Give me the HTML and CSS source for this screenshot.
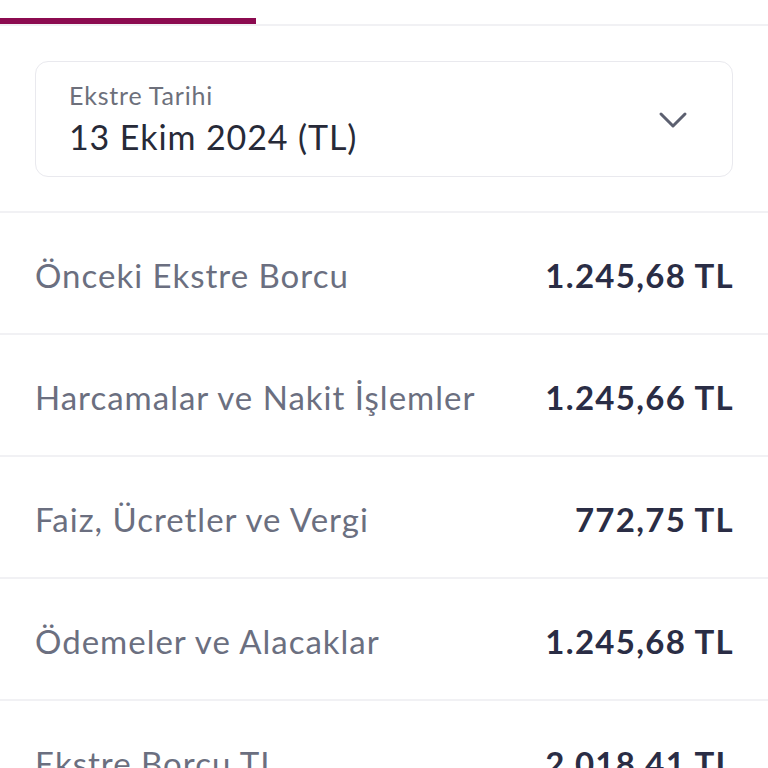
FILE: index.html
```html
<!DOCTYPE html>
<html lang="tr">
<head>
<meta charset="utf-8">
<link rel="stylesheet" href="styles.css">
</head>
<body>
<div class="tabs">
  <div class="tab active"></div>
  <div class="tab"></div>
  <div class="tab"></div>
</div>
<div class="select-wrap">
  <div class="select">
    <div class="select-text">
      <div class="select-label">Ekstre Tarihi</div>
      <div class="select-value">13 Ekim 2024 (TL)</div>
    </div>
    <svg class="chev" width="30" height="20" viewBox="0 0 30 20"><path d="M3 4 L15 16 L27 4" fill="none" stroke="#5c6070" stroke-width="3" stroke-linecap="round" stroke-linejoin="round"/></svg>
  </div>
</div>
<div class="rows">
  <div class="row"><span class="lbl">Önceki Ekstre Borcu</span><span class="amt">1.245,68 TL</span></div>
  <div class="row"><span class="lbl">Harcamalar ve Nakit İşlemler</span><span class="amt">1.245,66 TL</span></div>
  <div class="row"><span class="lbl">Faiz, Ücretler ve Vergi</span><span class="amt">772,75 TL</span></div>
  <div class="row"><span class="lbl">Ödemeler ve Alacaklar</span><span class="amt">1.245,68 TL</span></div>
  <div class="row"><span class="lbl">Ekstre Borcu TL</span><span class="amt">2.018,41 TL</span></div>
</div>
</body>
</html>
```
FILE: styles.css
```css
html, body { margin: 0; padding: 0; background: #fff; }
body { font-family: Lato, "Open Sans", sans-serif; width: 768px; height: 768px; overflow: hidden; }
.tabs { display: flex; height: 24px; border-bottom: 2px solid #f1f1f4; align-items: flex-end; }
.tab { width: 256px; height: 6px; }
.tab.active { background: #8c0b50; }
.select-wrap { padding: 35px 35px 34px 35px; border-bottom: 2px solid #f1f1f4; }
.select { display: flex; align-items: center; justify-content: space-between; border: 1.5px solid #e9e9ee; border-radius: 13px; height: 116px; padding: 0 44px 0 33px; box-sizing: border-box; }
.select-text { display: flex; flex-direction: column; }
.select-label { font-size: 25px; letter-spacing: 0.8px; color: #6d707b; line-height: 30px; margin-top: 0; }
.select-value { font-size: 34px; letter-spacing: 0.9px; color: #272a38; line-height: 42px; margin-top: 6px; }
.chev { margin-top: 2px; }
.row { display: flex; justify-content: space-between; align-items: center; height: 122px; padding: 4px 35px 0; box-sizing: border-box; border-bottom: 2px solid #f1f1f4; }
.lbl { font-size: 33px; letter-spacing: 1px; color: #6b6f80; }
.amt { font-size: 33px; letter-spacing: 1.3px; font-weight: 700; color: #2a2d45; margin-right: -1px; }
```
